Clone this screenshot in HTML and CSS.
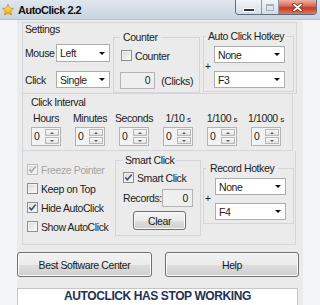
FILE: index.html
```html
<!DOCTYPE html>
<html lang="en">
<head>
    <meta charset="UTF-8">
    <meta name="viewport" content="width=device-width, initial-scale=1.0">
    <title>AutoClick 2.2</title>
    <link rel="stylesheet" href="styles.css">
</head>
<body>
    <div class="window">
        <header class="titlebar">
            <svg class="app-icon" width="12" height="12" viewBox="0 0 12 12">
                <defs>
                    <linearGradient id="starFill" x1="0" y1="0" x2="0" y2="1">
                        <stop offset="0" stop-color="#fff3a0"/>
                        <stop offset="0.5" stop-color="#f8cf2c"/>
                        <stop offset="1" stop-color="#e9a113"/>
                    </linearGradient>
                </defs>
                <path d="M6 0.5 L7.6 4.1 L11.5 4.5 L8.6 7.1 L9.5 11 L6 9 L2.5 11 L3.4 7.1 L0.5 4.5 L4.4 4.1 Z" fill="url(#starFill)" stroke="#c8860f" stroke-width="0.7" stroke-linejoin="round"/>
            </svg>
            <span class="title">AutoClick 2.2</span>
            <div class="caption">
                <span class="cap cap-min"><i></i></span>
                <span class="cap cap-max"><i></i></span>
                <span class="cap cap-close">
                    <svg width="11" height="9" viewBox="0 0 11 9">
                        <path d="M2 1.5 L9 7.5 M9 1.5 L2 7.5" stroke="#6b2418" stroke-width="3.4" stroke-linecap="round"/>
                        <path d="M2 1.5 L9 7.5 M9 1.5 L2 7.5" stroke="#ffffff" stroke-width="1.9" stroke-linecap="round"/>
                    </svg>
                </span>
            </div>
        </header>

        <div class="frame">
            <main class="client">
                <!-- top block: mouse options, counter, start hotkey -->
                <section class="box settings">
                    <div class="col-mouse">
                        <div class="box-title">Settings</div>
                        <div class="field mouse-row">
                            <label>Mouse</label>
                            <div class="select w54"><span>Left</span><i class="caret"></i></div>
                        </div>
                        <div class="field click-row">
                            <label>Click</label>
                            <div class="select w54 short"><span>Single</span><i class="caret"></i></div>
                        </div>
                    </div>

                    <fieldset class="counter">
                        <legend>Counter</legend>
                        <div class="check-row"><span class="cb"></span>Counter</div>
                        <div class="count-row">
                            <span class="num">0</span>
                            <span class="unit">(Clicks)</span>
                        </div>
                    </fieldset>

                    <fieldset class="hotkey">
                        <legend>Auto Click Hotkey</legend>
                        <div class="select key first"><span>None</span><i class="caret"></i></div>
                        <div class="plus">+</div>
                        <div class="select key"><span>F3</span><i class="caret"></i></div>
                    </fieldset>
                </section>

                <!-- click interval spinners -->
                <section class="box interval">
                    <div class="box-title indent">Click Interval</div>
                    <div class="interval-grid">
                        <span>Hours</span>
                        <span>Minutes</span>
                        <span>Seconds</span>
                        <span>1/10 <small>s</small></span>
                        <span>1/100 <small>s</small></span>
                        <span>1/1000 <small>s</small></span>
                        <div class="spin"><span class="spin-val">0</span><span class="spin-btns"><i class="up"></i><i class="down"></i></span></div>
                        <div class="spin"><span class="spin-val">0</span><span class="spin-btns"><i class="up"></i><i class="down"></i></span></div>
                        <div class="spin"><span class="spin-val">0</span><span class="spin-btns"><i class="up"></i><i class="down"></i></span></div>
                        <div class="spin"><span class="spin-val">0</span><span class="spin-btns"><i class="up"></i><i class="down"></i></span></div>
                        <div class="spin"><span class="spin-val">0</span><span class="spin-btns"><i class="up"></i><i class="down"></i></span></div>
                        <div class="spin"><span class="spin-val">0</span><span class="spin-btns"><i class="up"></i><i class="down"></i></span></div>
                    </div>
                </section>

                <!-- window options, smart click, record hotkey -->
                <section class="box lower">
                    <div class="options">
                        <div class="option disabled"><span class="cb checked"><svg width="9" height="9" viewBox="0 0 9 9"><path d="M1.3 4.4 L3.4 6.8 L7.8 1.6" fill="none" stroke="#a9a9a9" stroke-width="1.6"/></svg></span>Freeze Pointer</div>
                        <div class="option"><span class="cb"></span>Keep on Top</div>
                        <div class="option"><span class="cb checked"><svg width="9" height="9" viewBox="0 0 9 9"><path d="M1.3 4.4 L3.4 6.8 L7.8 1.6" fill="none" stroke="#3b5377" stroke-width="1.6"/></svg></span>Hide AutoClick</div>
                        <div class="option"><span class="cb"></span>Show AutoClick</div>
                    </div>

                    <fieldset class="smart">
                        <legend>Smart Click</legend>
                        <div class="check-row"><span class="cb checked"><svg width="9" height="9" viewBox="0 0 9 9"><path d="M1.3 4.4 L3.4 6.8 L7.8 1.6" fill="none" stroke="#3b5377" stroke-width="1.6"/></svg></span>Smart Click</div>
                        <div class="records">
                            <label>Records:</label>
                            <span class="num rec">0</span>
                        </div>
                        <div class="btn btn-clear">Clear</div>
                    </fieldset>

                    <fieldset class="rec-hotkey">
                        <legend>Record Hotkey</legend>
                        <div class="select key first"><span>None</span><i class="caret"></i></div>
                        <div class="plus">+</div>
                        <div class="select key"><span>F4</span><i class="caret"></i></div>
                    </fieldset>
                </section>

                <div class="actions">
                    <div class="btn btn-wide">Best Software Center</div>
                    <div class="btn btn-help">Help</div>
                </div>

                <div class="status">AUTOCLICK HAS STOP WORKING</div>
            </main>
        </div>
    </div>
</body>
</html>
```

FILE: styles.css
```css
* {
    box-sizing: border-box;
}

body {
    margin: 0;
    width: 320px;
    height: 305px;
    overflow: hidden;
    background-color: #f4f5f6;
    font-family: "Liberation Sans", Arial, sans-serif;
    font-size: 10.5px;
    letter-spacing: -0.4px;
    white-space: nowrap;
    color: #222222;
}

/* title bar */
.titlebar {
    display: flex;
    align-items: center;
    height: 20px;
    background: linear-gradient(#dfe6ee, #c9d4df);
    border-bottom: 1px solid #b7c1cc;
}

.app-icon {
    flex: none;
    margin-left: 2px;
}

.title {
    margin-left: 4px;
    font-size: 11px;
    font-weight: bold;
    letter-spacing: -0.5px;
    color: #111;
}

.caption {
    display: flex;
    align-self: flex-start;
    margin-left: auto;
    margin-right: 3px;
    height: 15px;
    border: 1px solid #5f6b7a;
    border-top: 0;
    border-radius: 0 0 4px 4px;
    overflow: hidden;
}

.cap {
    display: flex;
    align-items: center;
    justify-content: center;
    height: 100%;
}

.cap-min,
.cap-max {
    background: linear-gradient(#f2f5f8, #d3dbe5);
    border-right: 1px solid #8e99a6;
}

.cap-min {
    width: 26px;
    align-items: flex-end;
    padding-bottom: 3px;
}

.cap-min i {
    width: 10px;
    height: 2px;
    background-color: #2b3442;
    box-shadow: 0 0 0 1px #ffffff;
}

.cap-max {
    width: 17px;
}

.cap-max i {
    width: 8px;
    height: 7px;
    border: 1px solid #a6afba;
    border-top-width: 2px;
}

.cap-close {
    width: 37px;
    background: linear-gradient(#ebb2a5 0%, #da6550 45%, #c63a25 55%, #dc7b64 100%);
}

/* client area */
.frame {
    display: flex;
    height: 285px;
    padding-left: 17px;
}

.client {
    display: flex;
    flex-direction: column;
    align-items: flex-start;
    width: 286px;
    background-color: #ebebeb;
}

.box {
    margin-left: 5px;
    border: 1px solid #d3d6d9;
}

.box-title {
    line-height: 13px;
}

fieldset {
    margin: 0;
    min-width: 0;
    border: 1px solid #d3d6d9;
    align-self: flex-start;
}

legend {
    padding: 0 2px;
    line-height: 13px;
}

.settings {
    display: flex;
    margin-top: 2px;
    width: 275px;
    padding-left: 2px;
}

.col-mouse {
    width: 85px;
}

.field {
    display: flex;
    align-items: center;
}

.field label {
    width: 31px;
}

.mouse-row {
    margin-top: 8px;
}

.click-row {
    margin-top: 9px;
}

.select {
    display: flex;
    align-items: center;
    justify-content: space-between;
    height: 18px;
    padding: 0 4px 0 3px;
    border: 1px solid #adadad;
    background-color: #ffffff;
}

.w54 {
    width: 54px;
}

.short {
    height: 17px;
}

.caret {
    border-left: 3px solid transparent;
    border-right: 3px solid transparent;
    border-top: 3px solid #111;
}

.counter {
    margin-top: 8px;
    margin-left: 3px;
    width: 87px;
    padding: 0 6px 3px;
}

.counter legend {
    padding: 0 3px;
}

.check-row {
    display: flex;
    align-items: center;
    gap: 3px;
    height: 11px;
}

.counter .check-row {
    margin-top: 6px;
    margin-left: 1px;
}

.count-row {
    display: flex;
    align-items: center;
    margin-top: 11px;
}

.num {
    width: 38px;
    height: 17px;
    border: 1px solid #b4b4b4;
    background-color: #efefef;
    text-align: right;
    padding-right: 4px;
    line-height: 15px;
}

.unit {
    margin-left: 6px;
}

.hotkey {
    margin-top: 7px;
    margin-left: 3px;
    width: 91px;
    padding: 0 2px 3px;
}

.key {
    width: 71px;
    height: 17px;
    margin-left: 8px;
}

.key.first {
    margin-top: 3px;
}

.plus {
    height: 8px;
    line-height: 8px;
    font-size: 10px;
    margin-left: -1px;
}

/* checkboxes */
.cb {
    display: flex;
    align-items: center;
    justify-content: center;
    flex: none;
    width: 11px;
    height: 11px;
    border: 1px solid #8e8f8f;
    background: linear-gradient(135deg, #d9d9d9, #fbfbfb);
    box-shadow: inset 0 0 0 1px #f2f2f2;
}

.disabled {
    color: #a4a4a4;
}

.disabled .cb {
    border-color: #bdbdbd;
}

/* click interval */
.interval {
    width: 271px;
    border-top: 0;
    padding: 2px 0 4px;
}

.indent {
    padding-left: 8px;
}

.interval-grid {
    display: grid;
    grid-template-columns: repeat(6, 44px);
    row-gap: 1px;
    justify-items: center;
    margin-top: 3px;
    margin-left: 1px;
    line-height: 13px;
}

.interval-grid small {
    font-size: 8px;
}

.spin {
    display: flex;
    width: 30px;
    height: 19px;
    border: 1px solid #b3b3b3;
    background-color: #f3f3f3;
}

.spin-val {
    flex: 1;
    padding-left: 2px;
    line-height: 17px;
}

.spin-btns {
    display: flex;
    flex-direction: column;
    gap: 1px;
    width: 14px;
    margin: 1px 1px 1px 0;
}

.spin-btns i {
    display: flex;
    align-items: center;
    justify-content: center;
    flex: 1;
    border: 1px solid #b9b9b9;
    background: linear-gradient(#f8f8f8, #e2e2e2);
}

.spin-btns i::after {
    content: "";
    border-left: 2px solid transparent;
    border-right: 2px solid transparent;
    border-bottom: 2px solid #5a5a5a;
}

.spin-btns i.down::after {
    border-bottom: 0;
    border-top: 2px solid #5a5a5a;
}

/* lower block */
.lower {
    display: flex;
    width: 274px;
    height: 95px;
    border-top: 0;
}

.options {
    width: 92px;
    padding: 9px 0 0 4px;
}

.option {
    display: flex;
    align-items: center;
    gap: 3px;
    height: 19px;
}

.smart {
    margin-top: 3px;
    width: 86px;
    padding: 0 7px 5px;
}

.smart .check-row {
    margin-top: 5px;
}

.records {
    display: flex;
    align-items: center;
    margin-top: 6px;
}

.records label {
    width: 41px;
}

.num.rec {
    width: 33px;
    height: 18px;
    line-height: 16px;
}

.rec-hotkey {
    margin-top: 11px;
    margin-left: 2px;
    width: 91px;
    padding: 0 2px 3px;
}

.rec-hotkey legend {
    padding: 0 4px;
}

.rec-hotkey .key {
    margin-left: 9px;
}

/* buttons */
.btn {
    display: flex;
    align-items: center;
    justify-content: center;
    border: 1px solid #707070;
    border-radius: 3px;
    background: linear-gradient(#f3f3f3 0%, #ebebeb 50%, #dddddd 51%, #cfcfcf 100%);
    box-shadow: inset 0 0 0 1px #fbfbfb;
    color: #1a1a1a;
}

.btn-clear {
    margin: 4px 0 0 10px;
    width: 53px;
    height: 19px;
}

.actions {
    display: flex;
    gap: 13px;
    margin-top: 7px;
}

.btn-wide {
    width: 135px;
    height: 25px;
}

.btn-help {
    width: 134px;
    height: 25px;
}

.status {
    margin-top: 11px;
    width: 281px;
    height: 17px;
    border: 1px solid #c6c6c6;
    border-bottom: 0;
    background-color: #ffffff;
    text-align: center;
    font-size: 12px;
    font-weight: bold;
    line-height: 15px;
    color: #1c3258;
}
```
